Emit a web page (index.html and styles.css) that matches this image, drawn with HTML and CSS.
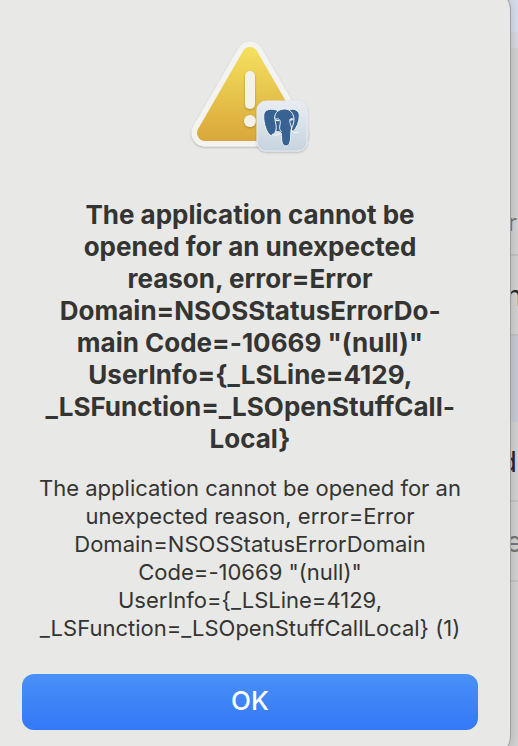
FILE: index.html
```html
<!DOCTYPE html>
<html lang="en">
  <head>
    <meta charset="UTF-8" />
    <meta name="viewport" content="width=device-width, initial-scale=1.0" />
    <title>Application error</title>
    <link rel="stylesheet" href="styles.css">
  </head>
  <body>
    <main class="dialog" role="alertdialog" aria-labelledby="title" aria-describedby="message">
      <svg class="icon" viewBox="0 0 124 120" aria-hidden="true">
        <defs>
          <linearGradient id="yellow" gradientUnits="userSpaceOnUse" x1="0" y1="10" x2="0" y2="105">
            <stop offset="0" stop-color="#f5e25f" />
            <stop offset="1" stop-color="#d9a73a" />
          </linearGradient>
          <linearGradient id="tile" x1="0" y1="0" x2="0" y2="1">
            <stop offset="0" stop-color="#e8edf2" />
            <stop offset="1" stop-color="#c6d3df" />
          </linearGradient>
          <filter id="shadow" x="-20%" y="-20%" width="140%" height="140%">
            <feDropShadow dx="0" dy="1" stdDeviation="1" flood-color="#000" flood-opacity="0.25" />
          </filter>
        </defs>
        <!-- warning triangle -->
        <g stroke-linejoin="round">
          <path d="M62 19 L17 97 H107 Z" fill="#f3f3f2" stroke="#f3f3f2" stroke-width="27" filter="url(#shadow)" />
          <path d="M62 19 L17 97 H107 Z" fill="url(#yellow)" stroke="url(#yellow)" stroke-width="16" />
        </g>
        <g fill="#f3f1ea" filter="url(#shadow)">
          <rect x="57" y="35" width="10" height="38" rx="5" />
          <circle cx="62" cy="85" r="6" />
        </g>
        <!-- app badge -->
        <rect x="69" y="65" width="50" height="50" rx="9" fill="url(#tile)" stroke="#e6ecf1" filter="url(#shadow)" />
        <g transform="translate(-8 -6) scale(0.3333)" fill="#386292" stroke="#f2f5f8" stroke-width="3" stroke-linejoin="round" stroke-linecap="round">
          <path d="M328 239 C342 234 358 241 358 257 C358 276 350 293 340 304 L326 296 Z" />
          <path d="M292 241 C276 234 251 236 251 258 C251 280 259 306 270 315 C276 319 281 312 287 305 L296 278 Z" />
          <path d="M284 263 C284 247 297 237 314 237 C330 237 341 250 342 267 C343 280 336 290 333 302 C331 313 335 348 319 348 C302 348 306 326 304 311 C301 302 292 307 286 304 C292 296 287 282 284 263 Z" />
          <path d="M335 303 C340 309 350 310 356 306 M277 313 C287 318 296 315 302 309 M286 268 C295 263 301 269 301 277 C301 288 294 295 304 305 M340 267 C330 262 327 270 331 281 C335 291 335 296 334 302" fill="none" />
          <path d="M289 271 L296 272 M332 270 L337 269" fill="none" stroke-width="4" />
        </g>
      </svg>
      <h1 class="title" id="title">The application cannot be opened for an unexpected reason, error=Error Domain=NSOSStatusErrorDo&shy;main Code=-10669 "(null)" <span class="nowrap">UserInfo={_LSLine=4129,</span> _LSFunction=_LSOpenStuffCall&shy;Local}</h1>
      <p class="message" id="message">The application cannot be opened for an unexpected reason, error=Error Domain=NSOSStatusErrorDomain Code=-10669 "(null)" <span class="nowrap">UserInfo={_LSLine=4129,</span> _LSFunction=_LSOpenStuffCallLocal} (1)</p>
      <button class="ok" type="button">OK</button>
    </main>

    <!-- window behind the dialog -->
    <div class="behind">
      <div class="toolbar"></div>
      <div class="tabs"></div>
      <div class="row head">r</div>
      <div class="row">n</div>
      <div class="row selected"></div>
      <div class="row end">d</div>
      <div class="row muted">e</div>
      <div class="rest"></div>
    </div>
  </body>
</html>
```

FILE: styles.css
```css
* {
  padding: 0;
  margin: 0;
  box-sizing: border-box;
}

body {
  display: flex;
  height: 100vh;
  overflow: hidden;
  font-family: Inter, "Liberation Sans", sans-serif;
  color: #343432;
  background: #d2d2d2;
}

.dialog {
  z-index: 1;
  flex: 1;
  display: flex;
  flex-direction: column;
  align-items: center;
  margin: -10px 0 -10px -10px;
  padding: 46px 32px 24px;
  border-radius: 20px;
  background: #e8e8e6;
  box-shadow: 0 0 0 1px #a0a0a2, 0 0 12px rgba(0, 0, 0, 0.2);
}

.icon {
  width: 124px;
  height: 120px;
}

.title {
  padding: 0 16px;
  margin-top: 43px;
  font-size: 26px;
  line-height: 32px;
  font-weight: 700;
  text-align: center;
}

.message {
  padding: 0 12px;
  margin-top: 19px;
  font-size: 22px;
  line-height: 28px;
  text-align: center;
}

.nowrap {
  white-space: nowrap;
}

.ok {
  width: 100%;
  height: 56px;
  margin-top: 32px;
  padding-bottom: 3px;
  border: none;
  border-radius: 12px;
  font-family: inherit;
  font-size: 26px;
  font-weight: 500;
  color: #fff;
  background: linear-gradient(#4990f7, #3478f6);
}

.behind {
  flex: 0 0 20px;
  margin-left: -12px;
  display: flex;
  flex-direction: column;
  overflow: hidden;
  font-size: 28px;
  color: #29292b;
}

.toolbar {
  height: 32px;
  background: #d6deee;
}

.tabs {
  height: 16px;
  background: #d6d7df;
}

.row {
  height: 80px;
  padding-left: 8px;
  line-height: 80px;
  border-bottom: 2px solid #c3c3c5;
}

.head {
  height: 208px;
  padding-top: 128px;
  padding-left: 10px;
  font-size: 24px;
  line-height: 94px;
  color: #777;
}

.selected {
  height: 86px;
  border: none;
  background: #c7cad4;
}

.end {
  display: flex;
  justify-content: flex-end;
  padding: 0 1px 0 0;
}

.muted {
  color: #777;
}

.rest {
  flex: 1;
}
```
